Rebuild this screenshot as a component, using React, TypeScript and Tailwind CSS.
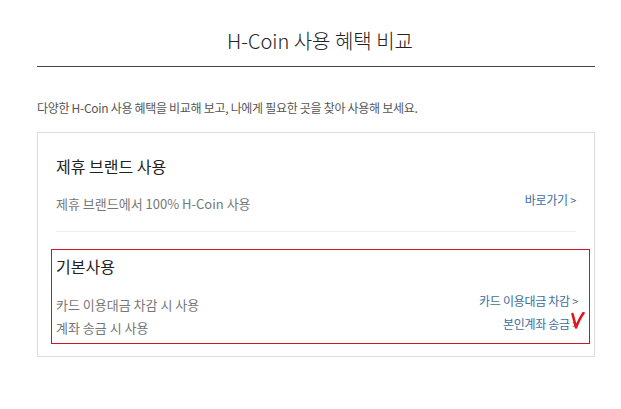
import React from 'react';

const font = { fontFamily: '"Noto Sans CJK KR", "Noto Sans", sans-serif' };

function Row({ text, link, children }: { text: string; link: string; children?: React.ReactNode }) {
    return (
        <div className="relative flex items-start justify-between">
            <span className="text-[13px] leading-[23px] text-[#777]">{text}</span>
            <span className="text-[12px] leading-[15px] text-[#3d6d9b] tracking-tight">
                {link} <span className="text-[11px]">&gt;</span>
            </span>
            {children}
        </div>
    );
}

export default function App() {
    return (
        <div className="w-[621px] h-[409px] bg-white pl-[37px] pr-[26px] select-none" style={font}>
            {/* Title */}
            <div className="pt-[28px] pb-[12px] pl-[8px] border-b border-[#444] text-center">
                <h1 className="text-[20px] leading-[26px] text-[#222] font-light">H-Coin 사용 혜택 비교</h1>
            </div>

            {/* Description */}
            <p className="mt-[32px] text-[12px] leading-[18px] text-[#555] tracking-tight">
                다양한 H-Coin 사용 혜택을 비교해 보고, 나에게 필요한 곳을 찾아 사용해 보세요.
            </p>

            {/* Compare box */}
            <div className="mt-[15px] border border-[#ddd] pb-[12px]">
                <div className="px-[18px] pt-[21px]">
                    <h2 className="text-[16px] leading-[24px] text-[#222]">제휴 브랜드 사용</h2>
                    <div className="mt-[14px]">
                        <Row text="제휴 브랜드에서 100% H-Coin 사용" link="바로가기" />
                    </div>
                    <div className="mt-[16px] border-t border-[#eee]" />
                </div>

                <div className="ml-[13px] mr-[4px] mt-[17px] border border-[#d3141c] pl-[4px] pr-[11px] pt-[4px] pb-[4px]">
                    <h2 className="text-[16px] leading-[24px] text-[#222]">기본사용</h2>
                    <div className="mt-[15px]">
                        <Row text="카드 이용대금 차감 시 사용" link="카드 이용대금 차감" />
                        <Row text="계좌 송금 시 사용" link="본인계좌 송금">
                            <svg
                                className="absolute right-[-7px] top-[-4px]"
                                width="14"
                                height="17"
                                viewBox="0 0 14 17"
                            >
                                <path
                                    d="M1.5 2 C2.5 6 4 11 5 15.5 C7 10.5 9.5 5 12.5 1"
                                    fill="none"
                                    stroke="#e3141c"
                                    strokeWidth="2.6"
                                    strokeLinecap="round"
                                    strokeLinejoin="round"
                                />
                            </svg>
                        </Row>
                    </div>
                </div>
            </div>
        </div>
    );
}
